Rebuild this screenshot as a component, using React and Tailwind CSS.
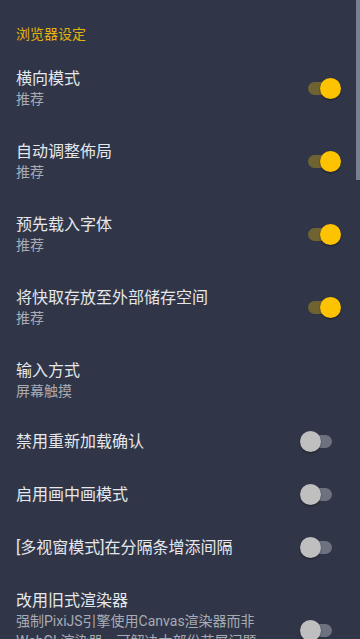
import React from 'react';

const font = { fontFamily: 'Roboto, "Noto Sans CJK SC", "Noto Sans", sans-serif' };

const prefs = [
  { title: '横向模式', summary: '推荐', on: true },
  { title: '自动调整佈局', summary: '推荐', on: true },
  { title: '预先载入字体', summary: '推荐', on: true },
  { title: '将快取存放至外部储存空间', summary: '推荐', on: true },
  { title: '输入方式', summary: '屏幕触摸', short: true },
  { title: '禁用重新加载确认', on: false },
  { title: '启用画中画模式', on: false },
  { title: '[多视窗模式]在分隔条增添间隔', on: false },
  {
    title: '改用旧式渲染器',
    summary: '强制PixiJS引擎使用Canvas渲染器而非 WebGL渲染器，可解决大部份花屏问题，但会降低游戏效能。',
    on: false,
  },
];

const Toggle = ({ on }) => (
  <div className="relative w-[41px] h-[21px] shrink-0">
    <div
      className={`absolute top-[4px] h-[13px] rounded-full ${
        on ? 'left-[8px] right-[4px] bg-[#6f6332]' : 'left-[4px] right-[9px] bg-[#6d7281]'
      }`}
    />
    <div
      className={`absolute top-0 w-[21px] h-[21px] rounded-full shadow-[0_1px_2px_rgba(0,0,0,0.45)] ${
        on ? 'right-0 bg-[#fdc300]' : 'left-0 bg-[#bfbfbf]'
      }`}
    />
  </div>
);

const PrefRow = ({ item }) => (
  <div className={`flex items-center pl-4 pr-[19px] pt-4 ${item.short ? 'pb-[14px]' : 'pb-4'}`}>
    <div className="flex-1 min-w-0 pr-4">
      <div className="text-[16px] leading-[21px] text-[#e6e7ea]">{item.title}</div>
      {item.summary && (
        <div className="text-[14px] leading-[20px] text-[#a8abb3]">{item.summary}</div>
      )}
    </div>
    {item.on !== undefined && <Toggle on={item.on} />}
  </div>
);

export default function App() {
  return (
    <div className="relative w-[360px] h-[639px] overflow-hidden bg-[#303648]" style={font}>
      <div className="px-4 pt-[24px] pb-[8px] text-[14px] leading-[20px] text-[#e3b20c]">浏览器设定</div>
      {prefs.map((p) => (
        <PrefRow key={p.title} item={p} />
      ))}
      <div className="absolute right-0 top-0 w-[4px] h-[180px] bg-[#7b8090]" />
    </div>
  );
}
